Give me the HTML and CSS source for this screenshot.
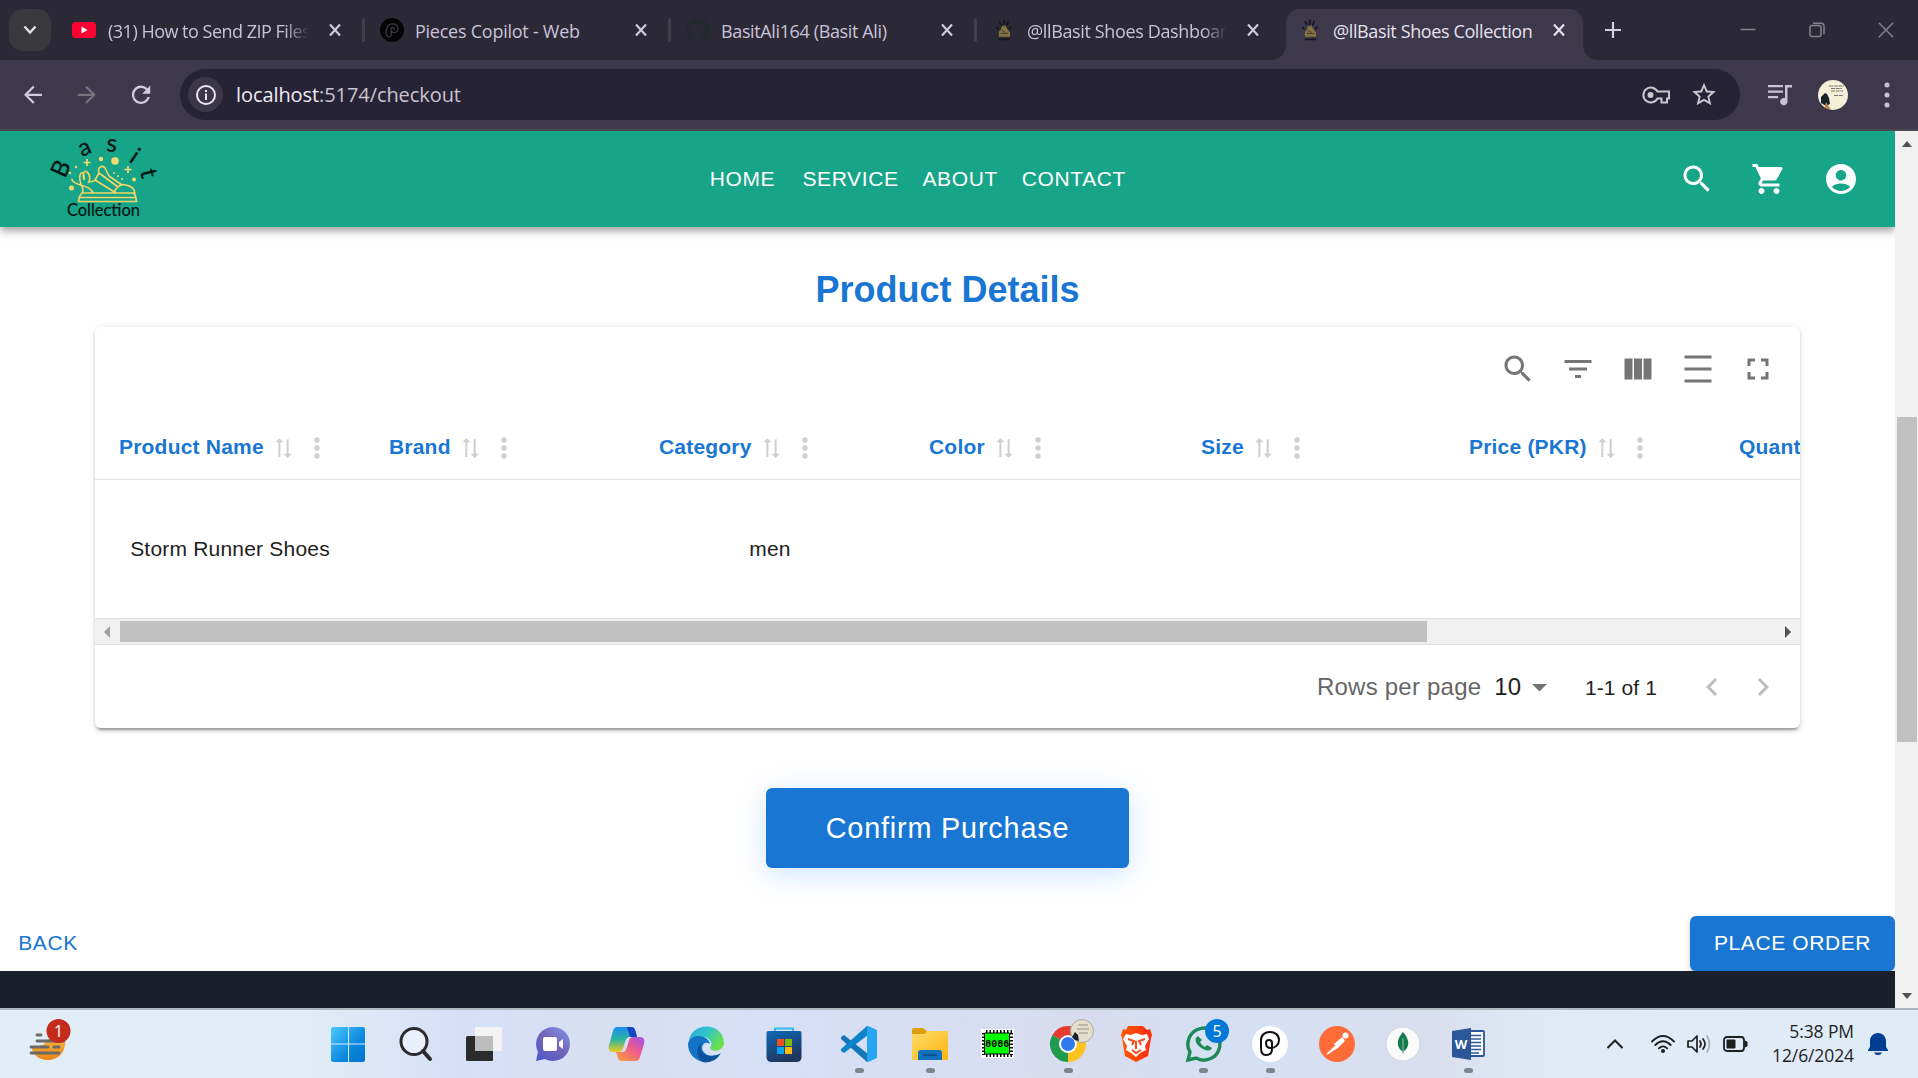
FILE: index.html
```html
<!DOCTYPE html>
<html lang="en">
<head>
<meta charset="utf-8">
<title>@llBasit Shoes Collection</title>
<link rel="stylesheet" href="styles.css">
</head>
<body>
<svg class="defs" width="0" height="0">
  <symbol id="close" viewBox="0 0 12 12"><path d="M1 0.5L11 11.5M11 0.5L1 11.5" fill="none" stroke="currentColor" stroke-width="2.2"/></symbol>
  <symbol id="shoe" viewBox="0 0 24 28"><g fill="none" stroke="#15151b" stroke-width="2"><path d="M3 11l3 2M6 4l3 4M12 2v6M17 3l-2 6M21 10l-3 3M6 25h13"/></g><path d="M6 22V16l2-2 2-5 2 1 1-2 3 5 3 4v5z" fill="#857440"/><path d="M8 18h9M9 14l5 3" stroke="#3a352a" stroke-width="1"/></symbol>
  <symbol id="sort" viewBox="0 0 24 24"><path transform="rotate(-90 12 12)" d="M21 8l-4-4v3H3v2h14v3zM2 16l4 4v-3h14v-2H6v-3z"/></symbol>
  <symbol id="more" viewBox="0 0 24 24"><circle cx="12" cy="6" r="2"/><circle cx="12" cy="12" r="2"/><circle cx="12" cy="18" r="2"/></symbol>
  <symbol id="search" viewBox="0 0 24 24"><path d="M15.5 14h-.79l-.28-.27C15.41 12.59 16 11.11 16 9.5 16 5.91 13.09 3 9.5 3S3 5.91 3 9.5 5.91 16 9.5 16c1.61 0 3.09-.59 4.23-1.57l.27.28v.79l5 4.99L20.49 19l-4.99-5zm-6 0C7.01 14 5 11.99 5 9.5S7.01 5 9.5 5 14 7.01 14 9.5 11.99 14 9.5 14z"/></symbol>
</svg>

<header class="tabstrip">
  <button class="tab-search"><svg width="14" height="10" viewBox="0 0 14 10"><path d="M1.5 1.5L7 7.5l5.500-6" fill="none" stroke="#e3e0e8" stroke-width="2.400"/></svg></button>
  <div class="tab first">
    <svg class="fav" width="24" height="24" viewBox="0 0 24 24"><rect y="4" width="24" height="16" rx="4" fill="#ff0033"/><path d="M9.500 8.500v7l6-3.500z" fill="#fff"/></svg>
    <span class="title t1 fade">(31) How to Send ZIP Files</span><svg class="x" width="12" height="12"><use href="#close"/></svg><i class="sep"></i>
  </div>
  <div class="tab">
    <svg class="fav" width="24" height="24" viewBox="0 0 24 24"><circle cx="12" cy="12" r="12" fill="#050506"/><path d="M9 19c-4-1-3-6-2-9 1-5 10-6 11 0 0 6-8 6-7 1 1-3 4-1 3 1M9 19c2 0 3-2 2-5" fill="none" stroke="#3d3b45" stroke-width="1.200"/></svg>
    <span class="title t2">Pieces Copilot - Web</span><svg class="x" width="12" height="12"><use href="#close"/></svg><i class="sep"></i>
  </div>
  <div class="tab">
    <svg class="fav" width="24" height="24" viewBox="0 0 24 24"><path fill="#24292e" d="M12 .3a12 12 0 0 0-3.800 23.380c.6.120.830-.260.830-.570L9 21.070c-3.340.720-4.040-1.610-4.040-1.610-.550-1.390-1.340-1.760-1.340-1.760-1.080-.740.090-.730.090-.730 1.200.090 1.830 1.240 1.830 1.240 1.080 1.830 2.810 1.300 3.500 1 .100-.780.420-1.310.760-1.610-2.670-.300-5.470-1.330-5.470-5.930 0-1.310.470-2.380 1.240-3.220-.140-.300-.540-1.520.100-3.180 0 0 1-.320 3.300 1.230a11.500 11.500 0 0 1 6 0c2.280-1.550 3.290-1.230 3.290-1.230.640 1.660.240 2.880.120 3.180a4.650 4.650 0 0 1 1.230 3.220c0 4.610-2.800 5.630-5.480 5.920.420.360.810 1.100.810 2.220l-.010 3.290c0 .310.200.690.820.570A12 12 0 0 0 12 .300"/></svg>
    <span class="title t3">BasitAli164 (Basit Ali)</span><svg class="x" width="12" height="12"><use href="#close"/></svg><i class="sep"></i>
  </div>
  <div class="tab">
    <svg class="fav" width="24" height="24"><use href="#shoe"/></svg>
    <span class="title t4 fade">@llBasit Shoes Dashboard</span><svg class="x" width="12" height="12"><use href="#close"/></svg>
  </div>
  <div class="tab active">
    <svg class="fav" width="24" height="24"><use href="#shoe"/></svg>
    <span class="title t5">@llBasit Shoes Collection</span><svg class="x" width="12" height="12"><use href="#close"/></svg>
  </div>
  <svg class="newtab" width="16" height="16" viewBox="0 0 16 16"><path d="M8 0v16M0 8h16" stroke="#d5d0e0" stroke-width="2.200"/></svg>
  <div class="winbtns">
    <svg width="16" height="16" viewBox="0 0 16 16"><path d="M.5 7.500h15" stroke="#85828c" stroke-width="1.500"/></svg>
    <svg width="16" height="16" viewBox="0 0 16 16"><g fill="none" stroke="#85828c" stroke-width="1.500"><rect x="1" y="3.500" width="11" height="11" rx="2"/><path d="M4 1.200h8a3 3 0 0 1 3 3v8"/></g></svg>
    <svg width="16" height="16" viewBox="0 0 16 16"><path d="M.8.800l14.400 14.400M15.200.800L.8 15.200" stroke="#85828c" stroke-width="1.500"/></svg>
  </div>
</header>

<nav class="toolbar">
  <svg class="nav-ic" width="30" height="30" viewBox="0 0 24 24" fill="#d2cbe0"><path d="M20 11H7.800l5.600-5.600L12 4l-8 8 8 8 1.400-1.400L7.800 13H20z" transform="translate(1.200 1) scale(.9)"/></svg>
  <svg class="nav-ic" width="30" height="30" viewBox="0 0 24 24" fill="#76727f"><path d="M4 11h12.200l-5.600-5.600L12 4l8 8-8 8-1.400-1.400 5.600-5.600H4z" transform="translate(1 1) scale(.9)"/></svg>
  <svg class="nav-ic" width="30" height="30" viewBox="0 0 24 24" fill="#d2cbe0"><path d="M17.650 6.350A7.960 7.960 0 0 0 12 4a8 8 0 1 0 7.730 10h-2.080A6 6 0 1 1 12 6c1.660 0 3.140.690 4.220 1.780L13 11h7V4z" transform="translate(1 .8) scale(.92)"/></svg>
  <div class="omnibox">
    <span class="info"><svg width="22" height="22" viewBox="0 0 22 22"><circle cx="11" cy="11" r="9" fill="none" stroke="#ebe6f0" stroke-width="2"/><path d="M11 9.500V16M11 6v2" stroke="#ebe6f0" stroke-width="2"/></svg></span>
    <span class="url"><b>localhost</b>:5174/checkout</span>
    <svg class="key" width="28" height="20" viewBox="0 0 28 20"><g fill="none" stroke="#c9c6cc" stroke-width="2"><path d="M15.500 6.500A7.500 7.500 0 1 0 15.500 13.500h4v4h5.500v-4h2v-7z"/></g><circle cx="8.500" cy="10" r="3" fill="#c9c6cc"/></svg>
    <svg class="star" width="30" height="30" viewBox="0 0 24 24" fill="#c9c6cc"><path d="M22 9.240l-7.190-.62L12 2 9.190 8.630 2 9.240l5.460 4.730L5.820 21 12 17.270 18.180 21l-1.630-7.030L22 9.240zM12 15.400l-3.760 2.270 1-4.280-3.320-2.880 4.380-.38L12 6.100l1.710 4.040 4.380.38-3.320 2.880 1 4.280L12 15.400z" transform="translate(.6 .3) scale(.95)"/></svg>
  </div>
  <svg class="queue" width="24" height="22" viewBox="0 0 24 22" fill="#c8c1d8"><path d="M0 1h15v2.200H0zM0 6.500h15v2.200H0zM0 12h10v2.200H0z"/><path d="M17 1h7v2.500h-4.500v14a3.700 3.700 0 1 1-2.500-3.400z"/></svg>
  <svg class="avatar" width="30" height="30" viewBox="0 0 30 30"><defs><clipPath id="av"><circle cx="15" cy="15" r="15"/></clipPath></defs><g clip-path="url(#av)"><path d="M0 0h30v30H0z" fill="#f4efd9"/><path d="M11 6h15M13 8.500h11M13 11h12M16 15.500h9" stroke="#7a776b" stroke-width="1" stroke-dasharray="4 .7"/><path d="M3 17l4-4 2 1 2 4 1 6-4 2-5-3z" fill="#17242f"/><path d="M8 22l5 8H6z" fill="#c08040"/></g></svg>
  <svg class="kebab" width="6" height="28" viewBox="0 0 6 28" fill="#c8c1d8"><circle cx="3" cy="4" r="2.500"/><circle cx="3" cy="14" r="2.500"/><circle cx="3" cy="24" r="2.500"/></svg>
</nav>

<div class="viewport">
  <main class="page">
    <header class="appbar">
      <svg class="logo" width="130" height="96" viewBox="0 1 130 96">
        <g class="arc"><text transform="translate(25 49) rotate(-66)">B</text><text transform="translate(42 27) rotate(-24)">a</text><text transform="translate(66 21) rotate(5)">s</text><text transform="translate(88 31) rotate(34)">i</text><text transform="translate(100 41) rotate(76)">t</text></g>
        <g fill="none" stroke="#f2d564" stroke-width="1.600" stroke-linejoin="round"><path d="M38.500 71.500h58l-1-5.500-2-3H42l-2.500 3.500zM40 67.500h56M42 63c4-5-4-8-2-18 2-5 5-1 4 5M44 50c-2-8 1-10 3-8 4 3 3 9 1 11M31.500 49c2 5 7 5 12 7 5 1 8 4 10 7M48 52c5 0 6-1 7-2l21 13M59 43c-2-5 3-9 6-5l4 8 13 9M55 50l4-7 19 14M74 63c3-8 8-9 12-8 5 1 9 3 9 9"/></g>
        <g fill="#f2dc72"><circle cx="75" cy="31" r="3.800"/><circle cx="61" cy="29" r="2.200"/><circle cx="31.500" cy="58" r="2.500"/><circle cx="94" cy="49.500" r="2"/><circle cx="36" cy="37" r="1.200"/><circle cx="30" cy="43" r="1.200"/><circle cx="74" cy="43" r="1"/><circle cx="78" cy="46" r="1"/><circle cx="82" cy="49" r="1"/></g>
        <path d="M47 29v7M43.500 32.500h7M88 36v7M84.500 39.500h7" stroke="#f2dc72" stroke-width="1.700"/>
        <text class="coll" x="27" y="85.500" textLength="73">Collection</text>
      </svg>
      <nav class="links"><a>HOME</a><a>SERVICE</a><a>ABOUT</a><a>CONTACT</a></nav>
      <div class="actions">
        <svg width="36" height="36"><use href="#search"/></svg>
        <svg width="36" height="36" viewBox="0 0 24 24"><path d="M7 18c-1.100 0-1.990.9-1.990 2S5.900 22 7 22s2-.9 2-2-.9-2-2-2zM1 2v2h2l3.600 7.590-1.350 2.450c-.16.280-.25.610-.25.960 0 1.100.9 2 2 2h12v-2H7.420c-.14 0-.25-.11-.25-.25l.03-.12.900-1.630h7.450c.75 0 1.410-.41 1.750-1.030l3.580-6.490c.08-.14.120-.31.120-.48 0-.55-.45-1-1-1H5.210l-.94-2H1zm16 16c-1.100 0-1.990.9-1.990 2s.89 2 1.990 2 2-.9 2-2-.9-2-2-2z"/></svg>
        <svg width="36" height="36" viewBox="0 0 24 24"><path d="M12 2C6.480 2 2 6.480 2 12s4.480 10 10 10 10-4.480 10-10S17.520 2 12 2zm0 4c1.930 0 3.500 1.570 3.500 3.500S13.930 13 12 13s-3.500-1.570-3.500-3.500S10.070 6 12 6zm0 14c-2.030 0-4.430-.82-6.140-2.880C7.550 15.800 9.680 15 12 15s4.450.8 6.140 2.120C16.430 19.180 14.030 20 12 20z"/></svg>
      </div>
    </header>

    <h1>Product Details</h1>

    <section class="card">
      <div class="tools">
        <svg width="36" height="36"><use href="#search"/></svg>
        <svg width="36" height="36" viewBox="0 0 24 24"><path d="M10 18h4v-2h-4v2zM3 6v2h18V6H3zm3 7h12v-2H6v2z"/></svg>
        <svg width="36" height="36" viewBox="0 0 24 24"><path d="M14.670 5v14H9.330V5h5.340zm1 14H21V5h-5.330v14zm-7.340 0V5H3v14h5.330z"/></svg>
        <svg width="36" height="36" viewBox="0 0 24 24"><path d="M3 3h18v2H3zm0 16h18v2H3zm0-8h18v2H3z"/></svg>
        <svg width="36" height="36" viewBox="0 0 24 24"><path d="M7 14H5v5h5v-2H7v-3zm-2-4h2V7h3V5H5v5zm12 7h-3v2h5v-5h-2v3zM14 5v2h3v3h2V5h-5z"/></svg>
      </div>
      <div class="row head">
        <div class="cell">Product Name<svg class="sort"><use href="#sort"/></svg><svg class="more"><use href="#more"/></svg></div>
        <div class="cell">Brand<svg class="sort"><use href="#sort"/></svg><svg class="more"><use href="#more"/></svg></div>
        <div class="cell">Category<svg class="sort"><use href="#sort"/></svg><svg class="more"><use href="#more"/></svg></div>
        <div class="cell">Color<svg class="sort"><use href="#sort"/></svg><svg class="more"><use href="#more"/></svg></div>
        <div class="cell size">Size<svg class="sort"><use href="#sort"/></svg><svg class="more"><use href="#more"/></svg></div>
        <div class="cell">Price (PKR)<svg class="sort"><use href="#sort"/></svg><svg class="more"><use href="#more"/></svg></div>
        <div class="cell">Quantity</div>
      </div>
      <div class="row body">
        <div class="cell">Storm Runner Shoes</div><div class="cell"></div><div class="cell">men</div><div class="cell"></div><div class="cell"></div><div class="cell"></div><div class="cell"></div>
      </div>
      <div class="hscroll"><i class="left"></i><div class="thumb"></div><i class="right"></i></div>
      <div class="pager">
        <span class="rpp">Rows per page</span><span class="ten">10</span>
        <svg class="caret" width="15" height="8" viewBox="0 0 15 8"><path d="M0 0h15L7.500 7.500z" fill="#757575"/></svg>
        <span class="range">1-1 of 1</span>
        <svg class="chev" width="36" height="36" viewBox="0 0 24 24"><path d="M15.410 7.410L14 6l-6 6 6 6 1.410-1.410L10.830 12z"/></svg>
        <svg class="chev" width="36" height="36" viewBox="0 0 24 24"><path d="M10 6L8.590 7.410 13.170 12l-4.580 4.590L10 18l6-6z"/></svg>
      </div>
    </section>

    <button class="confirm">Confirm Purchase</button>
    <div class="steps"><button class="back">BACK</button><button class="place">PLACE ORDER</button></div>
    <footer class="foot"></footer>
  </main>
  <aside class="vscroll"><i class="up"></i><div class="vthumb"></div><i class="down"></i></aside>
</div>

<footer class="taskbar">
  <svg class="news" width="44" height="46" viewBox="0 0 44 46"><defs><linearGradient id="or" x2="0" y2="1"><stop stop-color="#f2b23c"/><stop offset="1" stop-color="#f08416"/></linearGradient></defs><path d="M2 26c5 3 10 1 13-1l4-5 17 2c1 10-6 19-17 19C8 41 3 34 2 26z" fill="url(#or)"/><path d="M8 16h4M8 22h27M2 28h17M25 28h5M2 34h28" stroke="#6a6a68" stroke-width="2.800" stroke-linecap="round"/><circle cx="29.500" cy="12" r="12" fill="#c42b1c"/><text x="29.500" y="18" text-anchor="middle" class="badge">1</text></svg>
  <div class="apps">
    <svg viewBox="0 0 36 36"><defs><linearGradient id="win" x2="1" y2="1"><stop stop-color="#4ccbff"/><stop offset=".6" stop-color="#0c88de"/><stop offset="1" stop-color="#0073cf"/></linearGradient></defs><path d="M2.500 1h15.500v16.500H1V2.500zM19 1h14.500L35 2.500v15H19zM1 18.500h17V36H2.500L1 34.500zM19 18.500h16v16L33.500 36H19z" fill="url(#win)"/></svg>
    <svg viewBox="0 0 36 36"><circle cx="16" cy="15.500" r="13" fill="#e9f0fb" stroke="#2b2b2b" stroke-width="3"/><path d="M25 25l7 8" stroke="#2b2b2b" stroke-width="4" stroke-linecap="round"/></svg>
    <svg viewBox="0 0 36 36"><rect y="10" width="27" height="25" rx="1.500" fill="#2b2b2b"/><rect x="9" y="1" width="27" height="24" rx="1" fill="#f3f3f3"/><path d="M9 10h18v15H9z" fill="#bdbdbd"/></svg>
    <svg viewBox="0 0 36 36"><defs><linearGradient id="chat" x1="1" x2=".2" y2="1"><stop stop-color="#7b9cf0"/><stop offset=".5" stop-color="#7765b8"/><stop offset="1" stop-color="#5059c9"/></linearGradient></defs><path d="M18 1a17 17 0 1 1-8 32l-9 2 2-9A17 17 0 0 1 18 1z" fill="url(#chat)"/><rect x="8" y="11" width="14" height="14" rx="2" fill="#fff"/><path d="M24 16l4-3v10l-4-3z" fill="#fff"/></svg>
    <svg viewBox="0 0 36 36"><defs><linearGradient id="cp1" x2="0" y2="1"><stop stop-color="#1a8cf0"/><stop offset=".5" stop-color="#2cb59c"/><stop offset="1" stop-color="#f0cc22"/></linearGradient><linearGradient id="cp2" x1="1" x2=".2" y2="1"><stop stop-color="#9a55f0"/><stop offset=".5" stop-color="#ef5a8a"/><stop offset="1" stop-color="#f99a45"/></linearGradient></defs><path d="M9 1h14c3 0 4 2 5 6l1 4h-7c-3 0-4 2-5 5l-2 7c-1 2-2 3-5 3H5c-4 0-5-3-4-7L5 5c1-3 2-4 4-4z" fill="url(#cp1)"/><path d="M19 1h4c3 0 4 2 5 6l1 4h-7z" fill="#1744c0"/><path d="M27 35H14c-3 0-4-2-5-6l-1-3h6c3 0 4-2 5-5l2-7c1-2 2-3 5-3h6c4 0 5 3 4 7l-4 13c-1 3-2 4-5 4z" fill="url(#cp2)"/></svg>
    <svg viewBox="0 0 36 36"><defs><linearGradient id="ed1" x2="1" y2=".5"><stop stop-color="#2aa7df"/><stop offset=".5" stop-color="#31c5cc"/><stop offset="1" stop-color="#6be04b"/></linearGradient></defs><path d="M1 15C3-4 35-5 36 17c0 8-12 10-14 5 4-5-1-11-7-11C9 10 4 12 1 15z" fill="url(#ed1)"/><path d="M0 18C2 7 20 8 22 18c-5-4-10 2-7 7 4 6 12 6 18 2-4 8-12 10-18 9C6 34 0 27 0 18z" fill="#1374c6"/><path d="M14 17c-5 8 3 17 18 11-5 7-12 9-17 8-7-5-8-14-1-19z" fill="#0c5199"/></svg>
    <svg viewBox="0 0 36 36"><defs><linearGradient id="st" x2=".4" y2="1"><stop stop-color="#0d69b8"/><stop offset="1" stop-color="#20365f"/></linearGradient></defs><path d="M9 8V2.500h18V8" fill="none" stroke="#36b9ef" stroke-width="2.200"/><path d="M.5 7q0-2 2-2h31q2 0 2 2v24q0 5-5 5h-25q-5 0-5-5z" fill="url(#st)"/><path d="M11 13h7v7h-7z" fill="#f25022"/><path d="M19 13h7v7h-7z" fill="#7fba00"/><path d="M11 21h7v7h-7z" fill="#00a4ef"/><path d="M19 21h7v7h-7z" fill="#ffb900"/></svg>
    <svg viewBox="0 0 36 36"><path d="M0 11l3-2 24 19v8l-1 0L0 13z" fill="#1376bb"/><path d="M0 25l3 2L27 9V0h-1L0 23z" fill="#0d83cc"/><path d="M26 0l1 0 9 4v28l-9 4-1 0z" fill="#27a4f2"/></svg>
    <svg viewBox="0 0 36 36"><defs><linearGradient id="fo" x2="1" y2="1"><stop stop-color="#ffdc6b"/><stop offset="1" stop-color="#fbb60f"/></linearGradient></defs><path d="M0 4q0-2 2-2h9l4 3v6H0z" fill="#dd9e0c"/><path d="M0 8h12l4-3h20v29H0z" fill="url(#fo)"/><path d="M6 34v-7q0-3 3-3h18q3 0 3 3v7z" fill="#1171bd"/><path d="M11 29h14" stroke="#0b4a86" stroke-width="1.500"/></svg>
    <svg viewBox="0 0 36 36"><path d="M1 3h33v29H1z" fill="#fff"/><path d="M6 5.500h26M6 29.500h26" stroke="#000" stroke-width="3" stroke-dasharray="1.500 2"/><path d="M3.500 7v22M31.500 7v22" stroke="#000" stroke-width="3" stroke-dasharray="1.500 2"/><path d="M4.500 7h25v21h-25z" fill="#0f0" stroke="#000"/><text x="17.200" y="21" text-anchor="middle" class="chip">8086</text></svg>
    <svg viewBox="0 0 36 36"><path d="M18 18L2.400 9A18 18 0 0 1 33.600 9z" fill="#e33b2e"/><path d="M18 18l15.600-9A18 18 0 0 1 18 36z" fill="#fcc31e"/><path d="M18 18L18 36A18 18 0 0 1 2.400 9z" fill="#229a4b"/><path d="M18 18l7 6-7 12z" fill="#fcc31e"/><circle cx="18" cy="18" r="9" fill="#fff"/><circle cx="18" cy="18" r="7" fill="#3079ed"/><circle cx="32" cy="5" r="11.500" fill="#e3dfcc" stroke="#a9a79d"/><path d="M28-1h10M27 3h12M29 7h9" stroke="#b0ac9c" stroke-width="1.500"/><path d="M22 11l3-5 3 3 1 6-4-1z" fill="#17242f"/></svg>
    <svg viewBox="0 0 36 36"><defs><linearGradient id="br" x2="1"><stop stop-color="#ff5a00"/><stop offset="1" stop-color="#ff2a10"/></linearGradient></defs><path d="M10 0h15l4 4 3-1 2 6-1 3-3 18-12 6-11-6L4 12 3 9l2-6 3 1z" fill="url(#br)"/><path d="M8 8l5 1 5-2 6 2 5-1 2 5-4 7 1 4-6 3-4 4-5-4-5-3 1-4-4-7z" fill="#fff"/><path d="M10 13l6 2-2 4M27 13l-6 2 2 4M18 15v8M14 24l4 3 5-3" fill="none" stroke="#fb4a1a" stroke-width="2"/></svg>
    <svg viewBox="0 0 36 36"><path d="M3 34l2-8A16 16 0 1 1 11 32z" fill="#d6e0f3" stroke="#1d8a55" stroke-width="3.400"/><path d="M13 10c-4 2-3 7 2 11s10 5 12 1l-5-3-2 2c-2-1-4-3-5-5l2-2z" fill="#1d8a55"/><circle cx="32" cy="5" r="12" fill="#0078d7"/><text x="32" y="11" text-anchor="middle" class="badge">5</text></svg>
    <svg viewBox="0 0 36 36"><circle cx="18" cy="18" r="18" fill="#fff"/><path d="M14 29c-4 0-5-3-5-7v-8c0-5 4-8 9-8s9 3 9 8-4 8-8 8-5-3-5-5c0-4 6-4 6 0v6c0 4-2 6-6 6z" fill="none" stroke="#111" stroke-width="2"/></svg>
    <svg viewBox="0 0 36 36"><circle cx="18" cy="18" r="18" fill="#ff6c37"/><path d="M8 28l10-9-2-1 7-6 2 3-6 6z" fill="#fff" stroke="#fff" stroke-width="1.500"/><circle cx="26.500" cy="9.500" r="3" fill="#fff"/></svg>
    <svg viewBox="0 0 36 36"><circle cx="18" cy="18" r="17" fill="#fafafa" stroke="#cfd3da"/><path d="M18 6c7 8 7 15 0 20-7-5-7-12 0-20z" fill="#0f7a4c"/><path d="M18 12v16" stroke="#7fb89a" stroke-width="1.200"/></svg>
    <svg viewBox="0 0 36 36"><rect x="18" y="5" width="16" height="25" rx="1" fill="#fff" stroke="#2b579a" stroke-width="1.800"/><path d="M20 9.500h11M20 13h11M20 16.500h11M20 20h11M20 23.500h11M20 27h9" stroke="#2b579a" stroke-width="1.500"/><path d="M2 5l19-3v32L2 31z" fill="#2b579a"/><text x="11" y="23" text-anchor="middle" class="word">W</text></svg>
    <i class="run c8"></i><i class="run c9"></i><i class="run c11"></i><i class="run c13"></i><i class="run c14"></i><i class="run c17"></i>
  </div>
  <div class="tray">
    <svg class="up-ch" width="18" height="12" viewBox="0 0 18 12"><path d="M1.500 10L9 2.500l7.500 7.500" fill="none" stroke="#1f1f1f" stroke-width="2"/></svg>
    <svg class="wifi" width="26" height="20" viewBox="0 0 26 20"><g fill="none" stroke="#1f1f1f" stroke-width="1.800" stroke-linecap="round"><path d="M2 7.500q11-11 22 0M5.300 11q7.700-7.500 15.400 0M8.800 14.300q4.200-3.800 8.400 0"/></g><circle cx="13" cy="17" r="2" fill="#1f1f1f"/></svg>
    <svg class="vol" width="26" height="20" viewBox="0 0 26 20"><g fill="none" stroke="#1f1f1f" stroke-width="1.700" stroke-linejoin="round" stroke-linecap="round"><path d="M2 7h4l5-5v16l-5-5H2zM14 7q2 3 0 6M17 5q4 5 0 10"/><path d="M21 2q5 8 0 16" stroke="#a9aeb6"/></g></svg>
    <svg class="bat" width="25" height="16" viewBox="0 0 25 16"><rect x="1" y="1" width="20" height="14" rx="3" fill="none" stroke="#1f1f1f" stroke-width="1.800"/><rect x="3.500" y="3.500" width="9" height="9" rx="1" fill="#1f1f1f"/><path d="M22 5l2 1v4l-2 1z" fill="#1f1f1f" stroke="#1f1f1f"/></svg>
    <div class="clock"><span>5:38 PM</span><span>12/6/2024</span></div>
    <svg class="bell" width="20" height="24" viewBox="0 0 20 24" fill="#003e92"><path d="M10 1c5 0 8 4 8 8v6l2 3v1H0v-1l2-3V9c0-4 3-8 8-8zM6 20.500h8q-1 2.500-4 2.500t-4-2.500z"/></svg>
  </div>
</footer>
</body>
</html>
```
FILE: styles.css
```css
* { box-sizing: border-box; }
body { margin: 0; width: 1918px; height: 1078px; overflow: hidden; display: flex; flex-direction: column; background: #fff; font-family: "Liberation Sans", Arial, sans-serif; }
button { border: 0; font: inherit; letter-spacing: inherit; padding: 0; }
svg { display: block; flex: none; }
.defs { position: absolute; }

/* browser tab strip */
.tabstrip { height: 60px; flex: none; background: #2b2935; display: flex; align-items: center; font-family: "Open Sans", "Noto Sans", sans-serif; font-size: 18px; color: #c9c2da; }
.tab-search { width: 42px; height: 42px; margin: 0 14px 0 9px; border-radius: 14px; background: #39383d; display: flex; align-items: center; justify-content: center; }
.tab { width: 306px; height: 42px; display: flex; align-items: center; padding-left: 9px; }
.tab.first { padding-left: 7px; }
.tab.first .title { width: 201px; margin-left: 12px; }
.tab .title { width: 200px; margin-left: 11px; white-space: nowrap; overflow: hidden; line-height: 26px; margin-top: 2px; }
.t1 { letter-spacing: -.5px; }
.t2 { letter-spacing: -.25px; }
.t3 { letter-spacing: -.37px; }
.t4 { letter-spacing: -.36px; }
.t5 { letter-spacing: -.38px; }
.fade { -webkit-mask-image: linear-gradient(90deg, #000 88%, transparent 100%); }
.tab .x { margin-left: 20px; color: #cfc9dc; }
.tab .sep { width: 3px; height: 24px; border-radius: 2px; background: #403e47; margin-left: 21px; }
.tab.active { position: relative; width: 297px; height: 51px; align-self: flex-end; background: #3d384b; border-radius: 14px 14px 0 0; color: #e6e0ee; margin-left: -3px; padding: 0 0 9px 12px; }
.tab.active::before, .tab.active::after { content: ""; position: absolute; bottom: 0; width: 14px; height: 14px; }
.tab.active::before { left: -14px; background: radial-gradient(circle at 0 0, transparent 13.500px, #3d384b 14px); }
.tab.active::after { right: -14px; background: radial-gradient(circle at 100% 0, transparent 13.500px, #3d384b 14px); }
.tab.active .x { color: #e6e0ee; }
.newtab { margin-left: 22px; }
.winbtns { display: flex; gap: 53px; margin-left: auto; padding-right: 24px; }

/* address bar */
.toolbar { height: 71px; flex: none; background: #3d384b; border-bottom: 2px solid #4a4650; display: flex; align-items: center; padding-left: 18px; }
.nav-ic { margin-right: 24px; }
.omnibox { width: 1560px; height: 51px; border-radius: 26px; background: #272336; display: flex; align-items: center; padding-left: 8px; }
.info { width: 35px; height: 35px; border-radius: 50%; background: #3b364a; display: flex; align-items: center; justify-content: center; }
.url { font-family: "Open Sans", "Noto Sans", sans-serif; font-size: 20px; letter-spacing: -.08px; color: #c7c3cd; margin: -1px 0 0 13px; }
.url b { font-weight: 400; color: #f0ebf5; }
.key { margin-left: auto; }
.star { margin: 0 21px 0 19px; }
.queue { margin-left: 28px; }
.avatar { margin-left: 26px; }
.kebab { margin: 0 0 0 36px; }

/* page viewport */
.viewport { height: 877px; flex: none; display: flex; overflow: hidden; }
.page { width: 1895px; height: 877px; display: flex; flex-direction: column; }
.appbar { height: 96px; flex: none; background: #17a589; display: flex; align-items: center; box-shadow: 0 3px 6px -1.500px rgba(0,0,0,.2), 0 6px 7.500px rgba(0,0,0,.14), 0 1.500px 15px rgba(0,0,0,.12); }
.logo { margin-left: 40px; overflow: visible; }
.arc { font: 24px "Lato", sans-serif; fill: #071512; stroke: #071512; stroke-width: .3px; }
.coll { font: 16.500px "Lato", sans-serif; fill: #071512; stroke: #071512; stroke-width: .2px; }
.links { display: flex; margin-left: 524.500px; }
.links a { min-width: 96px; padding: 0 12px; text-align: center; color: #fff; font-size: 21px; letter-spacing: .6px; }
.actions { display: flex; gap: 36px; margin-left: auto; margin-right: 36px; fill: #fff; }
h1 { margin: 42px 0 0; height: 58px; text-align: center; font-size: 36px; line-height: 42px; color: #1976d2; }

.card { width: 1705px; height: 401px; flex: none; margin-left: 95px; background: #fff; border-radius: 6px; overflow: hidden; box-shadow: 0 4.500px 1.500px -3px rgba(0,0,0,.2), 0 3px 3px rgba(0,0,0,.14), 0 1.500px 7.500px rgba(0,0,0,.12); }
.tools { height: 84px; display: flex; justify-content: flex-end; align-items: center; gap: 24px; padding-right: 24px; fill: #757575; }
.row { width: 1890px; display: grid; grid-template-columns: repeat(7, 270px); font-size: 21px; letter-spacing: .2px; }
.cell { display: flex; align-items: center; }
.head { height: 69px; border-bottom: 1px solid #e0e0e0; color: #1976d2; font-weight: 700; }
.head .cell { padding: 4px 0 0 24px; }
.head .size { padding-left: 26px; }
.sort { width: 25px; height: 25px; margin: 1px 0 0 7px; fill: #cfcfcf; }
.more { width: 32px; height: 32px; margin: 2px 0 0 5px; fill: #cfcfcf; }
.body { height: 138px; color: #212121; }
.body .cell { justify-content: center; }
.hscroll { height: 27px; background: #f0f0f0; border: solid #e0e0e0; border-width: 1px 0; display: flex; align-items: center; padding: 0 9px; }
.hscroll i { border: 6px solid transparent; border-width: 6px 0; }
.hscroll .left { border-right: 6px solid #a0a0a0; margin-right: 10px; }
.hscroll .right { border-left: 6px solid #505050; margin-left: auto; }
.thumb { width: 1307px; height: 21px; background: #c1c1c1; }
.pager { height: 83px; display: flex; align-items: center; justify-content: flex-end; padding-right: 19px; font-size: 21px; color: #212121; }
.rpp { font-size: 24px; color: #666; letter-spacing: .22px; }
.ten { font-size: 24px; margin-left: 13px; }
.caret { margin: 2px 0 0 11px; }
.range { margin: 2px 37px 0 38px; letter-spacing: .1px; }
.chev { fill: #bdbdbd; }
.chev + .chev { margin-left: 15px; }

.confirm { width: 363px; height: 80px; flex: none; margin: 60px auto 0 766px; border-radius: 6px; background: #1976d2; color: #fff; font-size: 28.800px; letter-spacing: .82px; box-shadow: 0 6px 30px rgba(0,123,255,.2); }
.steps { height: 55px; flex: none; margin-top: 48px; display: flex; justify-content: space-between; font-size: 21px; letter-spacing: .6px; }
.steps button { padding-bottom: 2px; }
.back { width: 96px; background: none; color: #1976d2; }
.place { width: 205px; border-radius: 6px; background: #1976d2; color: #fff; box-shadow: 0 4.500px 1.500px -3px rgba(0,0,0,.2), 0 3px 3px rgba(0,0,0,.14), 0 1.500px 7.500px rgba(0,0,0,.12); }
.foot { height: 37px; background: #19202b; }

.vscroll { width: 23px; background: #f0f0f0; display: flex; flex-direction: column; align-items: center; padding: 10px 0 9px; }
.vscroll i { border: 5px solid transparent; border-width: 0 5px; }
.vscroll .up { border-bottom: 6px solid #505050; }
.vscroll .down { border-top: 6px solid #505050; margin-top: auto; }
.vthumb { width: 20px; height: 325px; margin-top: 270px; background: #c1c1c1; }

/* desktop taskbar */
.taskbar { height: 70px; flex: none; display: flex; align-items: center; border-top: 2px solid #adb7c0; background: linear-gradient(90deg, #e1edf7 0, #e1ecf7 16%, #d5e0f7 24%, #d9dff1 32%, #d6e0f6 40%, #d9dcef 57%, #d5e0f4 65%, #d9deef 74%, #e0eaf6 82%, #dfecf7 100%); }
.news { margin: -4px 0 0 29px; }
.apps { display: grid; grid-template-columns: 68px 68px 69px 73px 80px 78px 75px 71px 68px 70px 68px 67px 67px 67px 66px 65px 36px; grid-template-rows: 54px 5px; margin-left: 257px; height: 68px; padding-top: 5px; align-items: center; }
.apps svg { width: 36px; height: 36px; overflow: visible; grid-row: 1; margin-top: 4px; }
.run { grid-row: 2; width: 9px; height: 5px; border-radius: 3px; background: #7f858f; margin: -2px 0 0 13.500px; }
.c8 { grid-column: 8; } .c9 { grid-column: 9; } .c11 { grid-column: 11; } .c13 { grid-column: 13; } .c14 { grid-column: 14; } .c17 { grid-column: 17; }
.badge { font: 16px "Open Sans", sans-serif; fill: #fff; }
.chip { font: 700 10px "Liberation Mono", monospace; fill: #000; }
.word { font: 700 13px "Open Sans", sans-serif; fill: #fff; }
.tray { display: flex; align-items: center; margin-left: auto; padding-right: 30px; }
.wifi { margin-left: 26px; }
.vol { margin-left: 10px; }
.bat { margin-left: 11px; }
.clock { width: 106px; display: flex; flex-direction: column; align-items: flex-end; font: 17.500px/24px "Open Sans", "Noto Sans", sans-serif; letter-spacing: -.1px; color: #1f1f1f; margin-top: -2px; }
.bell { margin-left: 14px; }
```
